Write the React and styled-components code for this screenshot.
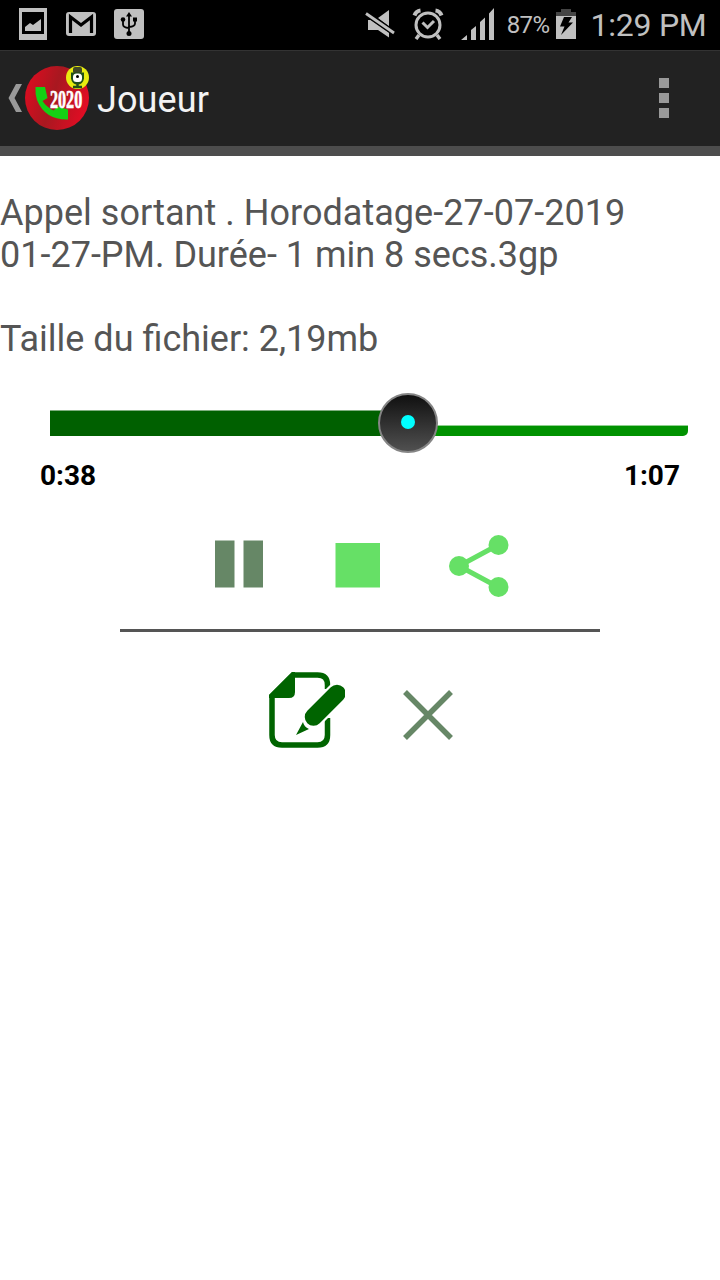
import styled, { createGlobalStyle } from "styled-components";

const GlobalStyle = createGlobalStyle`
  * {
    box-sizing: border-box;
  }
  body {
    margin: 0;
    background: #ffffff;
    font-family: Roboto, "Noto Sans", sans-serif;
  }
  svg {
    display: block;
    flex: none;
  }
`;
const Screen = styled.div`
  width: 720px;
  height: 1280px;
  overflow: hidden;
  background: #ffffff;
`;
const StatusBar = styled.div`
  height: 50px;
  padding: 0 13.5px 2px 18px;
  display: flex;
  align-items: center;
  justify-content: space-between;
  background: #000000;
  color: #c0c0c0;
`;
const StatusGroup = styled.div`
  display: flex;
  align-items: center;
  gap: ${({ gap }) => gap}px;
`;
const Signals = styled.div`
  display: flex;
  align-items: center;
  gap: 17px;
  margin-right: -3px;
`;
const Battery = styled.div`
  display: flex;
  align-items: center;
  gap: 7px;
  font-size: 24px;
  letter-spacing: -0.6px;
`;
const Percent = styled.span`
  padding-top: 2px;
`;
const Clock = styled.div`
  padding-top: 2px;
  font-size: 32px;
  line-height: 46px;
  letter-spacing: -0.25px;
  margin-left: -1px;
`;
const AppBar = styled.header`
  height: 106px;
  padding: 0 51px 2px 8px;
  display: flex;
  align-items: center;
  background: #222222;
  border-top: 1px solid #333333;
  border-bottom: 10px solid #4d4d4d;
`;
const Title = styled.h1`
  flex: 1;
  margin: 5px 0 0 7px;
  font-size: 36px;
  font-weight: 400;
  letter-spacing: 0.1px;
  color: #f3f3f3;
`;
const MenuButton = styled.button`
  display: flex;
  flex-direction: column;
  gap: 5px;
  padding: 0;
  border: none;
  background: none;
`;
const MenuDot = styled.span`
  width: 10px;
  height: 10px;
  background: #999999;
`;
const Details = styled.div`
  padding-top: 36px;
  font-size: 36px;
  line-height: 42px;
  color: #555555;
`;
const Line = styled.p`
  margin: 0 0 ${({ spaced }) => (spaced ? "42px" : "0")};
  &::first-line {
    letter-spacing: ${({ spaced }) => (spaced ? "0.03px" : "normal")};
  }
`;
const SeekBar = styled.div`
  position: relative;
  display: flex;
  align-items: flex-end;
  height: 26px;
  margin: 50px 32px 0 50px;
`;
const Played = styled.div`
  height: 26px;
  background: #006000;
  border-top: 1px solid #7fae7f;
`;
const Remaining = styled.div`
  flex: 1;
  height: 11px;
  background: #009200;
  border-top: 1px solid #8fd08f;
  border-bottom-right-radius: 5px;
`;
const Thumb = styled.div`
  position: absolute;
  top: -17px;
  width: 60px;
  height: 60px;
  margin-left: -30px;
  display: flex;
  align-items: center;
  justify-content: center;
  border: 2px solid #858585;
  border-radius: 50%;
  background: linear-gradient(#101010, #505050);
`;
const ThumbDot = styled.div`
  width: 14px;
  height: 14px;
  margin-bottom: 2px;
  border-radius: 50%;
  background: #00ffff;
`;
const Times = styled.div`
  display: flex;
  justify-content: space-between;
  padding: 23px 40px 0;
  font-size: 28px;
  font-weight: 700;
  line-height: 33px;
  color: #000000;
`;
const Actions = styled.div`
  display: flex;
  justify-content: center;
  align-items: flex-start;
  height: ${({ height }) => height}px;
  padding: ${({ pad }) => pad};
`;
const IconButton = styled.button`
  padding: 0;
  border: none;
  background: none;
  margin: ${({ top = 0, left = 0 }) => `${top}px 0 0 ${left}px`};
`;
const Divider = styled.hr`
  width: 480px;
  height: 3px;
  margin: 0 auto;
  border: none;
  background: #555555;
`;

const PictureIcon = () => (
  <svg width="30" height="32" viewBox="0 0 30 32">
    <path fill="#c0c0c0" fillRule="evenodd" d="M1 0h28v32H1zM4 4v22h22V4z" />
    <path fill="#c0c0c0" d="M7 23v-4l5-4 3 2 8-6v12z" />
  </svg>
);
const MailIcon = () => (
  <svg width="30" height="24" viewBox="0 0 30 24">
    <rect width="30" height="24" rx="3" fill="#c0c0c0" />
    <path d="M4.5 21V5L15 13 25.5 5v16" fill="none" stroke="#000" strokeWidth="3.2" />
  </svg>
);
const UsbIcon = () => (
  <svg width="30" height="30" viewBox="0 0 30 30">
    <rect width="30" height="30" rx="3" fill="#c0c0c0" />
    <path d="M15 25V5M9 11v4.5q0 3 6 3.5M21 11v3.5q0 3-6 3.5" fill="none" stroke="#000" strokeWidth="1.8" />
    <path d="M12 7.5 15 3l3 4.5z" />
    <circle cx="15" cy="24.5" r="2.5" />
    <circle cx="9" cy="10.5" r="2.3" />
    <rect x="19" y="8.5" width="4" height="4" />
  </svg>
);
const MuteIcon = () => (
  <svg width="30" height="30" viewBox="0 0 30 30">
    <path fill="#c0c0c0" d="M13 9 24 1v16.5zM3 11h3l18 12.5v5L13 21H3z" />
    <path d="M1 4.5 29 24" stroke="#000" strokeWidth="5.5" />
    <path d="M1 4.5 29 24" stroke="#c0c0c0" strokeWidth="2.8" />
  </svg>
);
const AlarmIcon = () => (
  <svg width="32" height="32" viewBox="0 0 32 32" fill="none" stroke="#c0c0c0">
    <circle cx="16" cy="17" r="12" strokeWidth="3" />
    <path d="M2.5 7.5Q4 3 8.5 2.5M29.5 7.5Q28 3 23.5 2.5" strokeWidth="4" />
    <path d="M7 27l-3 4M25 27l3 4" strokeWidth="3.5" />
    <path d="M10.5 14.5l5 5 6.5-6.5" strokeWidth="3" />
  </svg>
);
const SignalIcon = () => (
  <svg width="34" height="32" viewBox="0 0 34 32" fill="#c0c0c0">
    <path d="M0 32l6-5v5zM10 32V22l5-4v14zM19 32V14l5-4.5V32zM28 32V5.5L33 0v32z" />
  </svg>
);
const BatteryIcon = () => (
  <svg width="20" height="30" viewBox="0 0 20 30">
    <path fill="#444" d="M5 0h10v3h5v4H0V3h5z" />
    <path fill="#c0c0c0" d="M0 7h20v23H0z" />
    <path d="M8 8h8l-3.500 5.500H17L5 26l3.500-8.500H4z" />
  </svg>
);
const BackIcon = () => (
  <svg width="15" height="30" viewBox="0 0 15 30">
    <path fill="#999" d="M8 1h6L6.500 15 14 29H8L.5 15z" />
  </svg>
);
const Logo = () => (
  <svg width="67" height="66" viewBox="0 0 67 66">
    <defs>
      <linearGradient id="red" x1="0" y1=".3" x2="1" y2=".6">
        <stop offset="0" stopColor="#dc0c20" />
        <stop offset=".45" stopColor="#a81820" />
        <stop offset="1" stopColor="#e40c24" />
      </linearGradient>
    </defs>
    <circle cx="34" cy="33" r="32" fill="url(#red)" />
    <path fill="#14d014" d="M12.500 22h9.500l2.500 11-5 3q4 6 11 9.500l4.500-4 10 3v10Q22 55 14 35q-2-6-1.500-13z" />
    <text
      transform="translate(27 43) scale(.62 1)"
      fill="#fff"
      stroke="#fff"
      strokeWidth=".7"
      fontFamily="'Liberation Serif', serif"
      fontSize="26"
      fontWeight="700"
    >
      2020
    </text>
    <circle cx="54.5" cy="12.5" r="11.5" fill="#e8ec10" />
    <rect x="50" y="2" width="9" height="6.5" rx="2" fill="#404828" />
    <path d="M48 7.500h13v6q-1 6-6.500 6t-6.500-6z" fill="#205018" />
    <rect x="50" y="8.5" width="9" height="8.5" rx="3.5" fill="#fff" />
    <circle cx="54.5" cy="11.5" r="1.5" />
    <path d="M54.500 19v2.500M50 22h9" stroke="#205018" strokeWidth="2.5" />
  </svg>
);
const PauseIcon = () => (
  <svg width="48" height="48" viewBox="0 0 48 48" fill="#668766">
    <path d="M0 .5h19.5v47H0zM28.500.5H48v47H28.500z" />
  </svg>
);
const StopIcon = () => (
  <svg width="45" height="45" viewBox="0 0 45 45">
    <rect x=".5" width="44.5" height="44.5" fill="#66e066" />
  </svg>
);
const ShareIcon = () => (
  <svg width="60" height="62" viewBox="0 0 60 62" fill="#66e066">
    <path d="M49 10 10 31l39 21" fill="none" stroke="#66e066" strokeWidth="5" />
    <circle cx="49.5" cy="10" r="10" />
    <circle cx="10" cy="31" r="10" />
    <circle cx="49.5" cy="52" r="10" />
  </svg>
);
const EditIcon = () => (
  <svg width="76" height="76" viewBox="0 0 76 76">
    <path
      d="M58.500 17v-4q0-10-10-10H24L3 24v39q0 10 10 10h35.500q10 0 10-10V46"
      fill="none"
      stroke="#006400"
      strokeWidth="5.5"
    />
    <path fill="#006400" d="M0 23 23 0h3v20q0 6-6 6H0z" />
    <path d="M44.500 45 68 21.500" stroke="#fff" strokeWidth="22" strokeLinecap="round" />
    <path d="M44.500 45 68 21.500" stroke="#006400" strokeWidth="17.500" strokeLinecap="round" />
    <path fill="#006400" d="M27 63 34 50q1 5 6 7z" />
  </svg>
);
const CloseIcon = () => (
  <svg width="50" height="50" viewBox="0 0 50 50">
    <path d="M2 2l46 46M48 2 2 48" stroke="#668766" strokeWidth="5.5" />
  </svg>
);

const App = () => {
  const progress = (358 / 638) * 100;

  return (
    <Screen>
      <GlobalStyle />
      <StatusBar>
        <StatusGroup gap={18}>
          <PictureIcon />
          <MailIcon />
          <UsbIcon />
        </StatusGroup>
        <StatusGroup gap={15}>
          <Signals>
            <MuteIcon />
            <AlarmIcon />
            <SignalIcon />
          </Signals>
          <Battery>
            <Percent>87%</Percent>
            <BatteryIcon />
          </Battery>
          <Clock>1:29 PM</Clock>
        </StatusGroup>
      </StatusBar>
      <AppBar>
        <BackIcon />
        <Logo />
        <Title>Joueur</Title>
        <MenuButton aria-label="Menu">
          <MenuDot />
          <MenuDot />
          <MenuDot />
        </MenuButton>
      </AppBar>
      <Details>
        <Line spaced>
          Appel sortant . Horodatage-27-07-2019
          <br />
          01-27-PM. Durée- 1 min 8 secs.3gp
        </Line>
        <Line>Taille du fichier: 2,19mb</Line>
      </Details>
      <SeekBar>
        <Played style={{ width: `${progress}%` }} />
        <Remaining />
        <Thumb style={{ left: `${progress}%` }}>
          <ThumbDot />
        </Thumb>
      </SeekBar>
      <Times>
        <span>0:38</span>
        <span>1:07</span>
      </Times>
      <Actions height={137} pad="43px 0 0 4px">
        <IconButton top={5} aria-label="Pause">
          <PauseIcon />
        </IconButton>
        <IconButton top={8} left={72} aria-label="Stop">
          <StopIcon />
        </IconButton>
        <IconButton left={69} aria-label="Partager">
          <ShareIcon />
        </IconButton>
      </Actions>
      <Divider />
      <Actions height={156} pad="40px 0 0 2px">
        <IconButton aria-label="Modifier">
          <EditIcon />
        </IconButton>
        <IconButton top={18} left={58} aria-label="Fermer">
          <CloseIcon />
        </IconButton>
      </Actions>
    </Screen>
  );
};

export default App;
